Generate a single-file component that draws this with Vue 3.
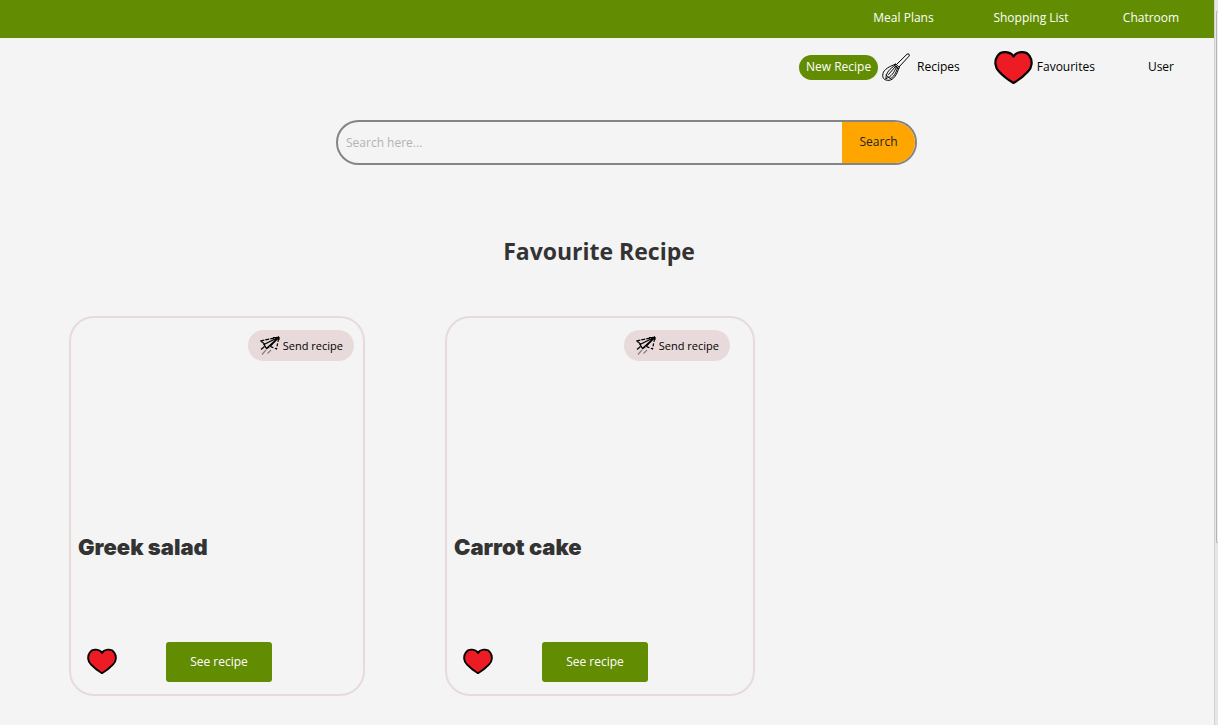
<script setup>
import { ref } from 'vue'

const query = ref('')
const recipes = [
  { id: 1, title: 'Greek salad' },
  { id: 2, title: 'Carrot cake' },
]
const heart =
  'M19.5 6.5C17 1.500 7 0 3.500 6C0 11 1 17.500 5 21.500C9 26 14.500 30 19.500 33C24.500 30 30 26 34 21.500C38 17.500 39 11 35.500 6C32 0 22 1.500 19.500 6.500Z'
</script>

<template>
  <div class="window">
    <div class="page">
      <nav class="topbar" aria-label="Main">
        <a class="top-link meal" href="#">Meal Plans</a>
        <a class="top-link shopping" href="#">Shopping List</a>
        <a class="top-link chat" href="#">Chatroom</a>
      </nav>

      <nav class="subbar" aria-label="Recipes">
        <button class="new-recipe" type="button">New Recipe</button>
        <a class="sub-link recipes" href="#">
          <svg class="whisk" viewBox="0 0 28 28" fill="none" stroke="#000" stroke-linecap="round" aria-hidden="true">
            <path d="M14.500 11.500L25 1.200C26.500 0 28.200 1.800 27 3.200L17 14" />
            <path d="M13.500 11L17.500 14.500L16.500 16L12.500 12Z" />
            <path d="M13.500 11.500C8 12.500 1.500 17 1 20.500C0 25 2 27.500 7 27.300C11.500 27 15.500 21 16.500 15.500" />
            <path d="M13 12.500C8 15.500 3.500 20 4 25.500M14.500 13.500C12.500 19 9.500 24 4 25.500M13.500 13.500L6.500 21.500M15.500 14.500C14.500 20 11 25 8 25.500L4 22" />
          </svg>
          <span>Recipes</span>
        </a>
        <a class="sub-link favourites" href="#">
          <svg class="heart-large" viewBox="0 0 39 34" aria-hidden="true">
            <path :d="heart" fill="#ed1c24" stroke="#000" stroke-width="2.2" stroke-linejoin="round" />
          </svg>
          <span>Favourites</span>
        </a>
        <a class="sub-link" href="#">User</a>
      </nav>

      <form class="search" role="search" @submit.prevent>
        <input v-model="query" class="search-input" type="text" placeholder="Search here..." aria-label="Search recipes" />
        <button class="search-button" type="submit">Search</button>
      </form>

      <main>
        <h1 class="heading">Favourite Recipe</h1>
        <div class="cards">
          <article v-for="recipe in recipes" :key="recipe.id" class="card">
            <button class="send" type="button">
              <svg class="plane" viewBox="0 0 20 20" fill="none" stroke="#000" aria-hidden="true">
                <path d="M19 1L0.500 5L5.500 8.500" stroke-width="1.200" stroke-dasharray="4 1" />
                <path d="M19 1L4 8.500L6.500 12.500Z" stroke-width="1.300" />
                <path d="M19 1L10 10.500M13 1.500H19V4" stroke-width="1.200" />
                <path d="M18.500 3L16.500 13L10.500 10.500L6.500 12.500" stroke-width="1.200" stroke-dasharray="3 1.500" />
                <path d="M4.500 10.500L1 13.500" stroke-width="1.200" />
                <path d="M6 14L2 18.500M11 14L7.500 17.500" stroke="#8b7c7d" stroke-width="1.200" />
              </svg>
              <span>Send recipe</span>
            </button>
            <h2 class="title">{{ recipe.title }}</h2>
            <div class="actions">
              <button class="like" type="button" aria-label="Remove from favourites">
                <svg class="heart-small" viewBox="0 0 39 34" aria-hidden="true">
                  <path :d="heart" fill="#ed1c24" stroke="#000" stroke-width="2.400" stroke-linejoin="round" />
                </svg>
              </button>
              <button class="see" type="button">See recipe</button>
            </div>
          </article>
        </div>
      </main>
    </div>
    <div class="scroll-track" aria-hidden="true">
      <div class="scroll-thumb"></div>
    </div>
  </div>
</template>

<style>
body {
  background: #f4f4f4;
}
</style>

<style scoped>
.window {
  display: flex;
  min-height: 100vh;
  background: #f4f4f4;
  color: #000;
  font: 12px/16px "Segoe UI", "Open Sans", "Noto Sans", sans-serif;
}
.window * {
  box-sizing: border-box;
}
button {
  border: 0;
  padding: 0;
  font: inherit;
  cursor: pointer;
}
a {
  color: inherit;
  text-decoration: none;
}
svg {
  display: block;
  flex: none;
}
.page {
  flex: 1;
  min-width: 0;
}
.topbar {
  display: flex;
  justify-content: flex-end;
  align-items: center;
  height: 38px;
  padding: 0 8px 2px 0;
  background: #628d03;
  color: #fff;
}
.top-link {
  text-align: center;
}
.meal {
  width: 125px;
}
.shopping {
  width: 130px;
}
.chat {
  width: 110px;
}
.subbar {
  display: flex;
  justify-content: flex-end;
  align-items: center;
  height: 58px;
  padding-right: 40px;
}
.sub-link {
  display: flex;
  align-items: center;
}
.new-recipe {
  width: 79px;
  height: 25px;
  margin-right: 4px;
  border-radius: 13px;
  background: #628d03;
  color: #fff;
}
.recipes {
  gap: 7px;
  margin-right: 34px;
}
.favourites {
  gap: 4px;
  margin-right: 53px;
}
.whisk {
  width: 28px;
  height: 28px;
}
.heart-large {
  width: 39px;
  height: 34px;
}
.search {
  display: flex;
  height: 45px;
  margin: 24px 297px 0 336px;
  border: 2px solid #848484;
  border-radius: 23px;
  overflow: hidden;
}
.search-input {
  flex: 1;
  min-width: 0;
  padding: 0 8px;
  border: 0;
  outline: 0;
  background: transparent;
  font: inherit;
}
.search-input::placeholder {
  color: #b3b3b3;
  opacity: 1;
}
.search-button {
  width: 73px;
  padding-bottom: 2px;
  background: #ffa500;
  color: #222;
  font-size: 12px;
}
.heading {
  margin: 0 16px 0 0;
  padding-top: 70px;
  color: #333;
  font-size: 23px;
  line-height: 32px;
  font-weight: 700;
  text-align: center;
}
.cards {
  display: flex;
  align-items: flex-start;
  gap: 80px;
  padding: 49px 69px 29px;
}
.card {
  display: flex;
  flex-direction: column;
  width: 296px;
  height: 380px;
  padding: 12px 9px 12px 7px;
  border: 2px solid #e8dada;
  border-radius: 25px;
}
.card:nth-child(2) {
  width: 310px;
  padding-right: 23px;
}
.send {
  display: flex;
  align-items: center;
  align-self: flex-end;
  gap: 3px;
  height: 31px;
  padding: 0 11px 0 12px;
  border-radius: 16px;
  background: #e8dada;
  color: #000;
  font-size: 11px;
}
.plane {
  width: 20px;
  height: 20px;
}
.title {
  margin: auto 0 80px;
  color: #333;
  font: 900 22px/30px "Arial Black", Inter, sans-serif;
}
.actions {
  display: flex;
  align-items: center;
  padding-left: 9px;
  gap: 49px;
}
.like {
  padding-bottom: 3px;
  background: transparent;
}
.heart-small {
  width: 30px;
  height: 26px;
}
.see {
  width: 106px;
  height: 40px;
  border-radius: 3px;
  background: #628d03;
  color: #fff;
}
.scroll-track {
  width: 4px;
  padding-top: 11px;
  border-left: 1px solid #d3d3d3;
  background: #e6e6e6;
}
.scroll-thumb {
  height: 532px;
  margin-left: 1px;
  border: 1px solid #b4b4b4;
  border-right: 0;
  border-radius: 3px 0 0 3px;
  background: #efefef;
}
</style>
